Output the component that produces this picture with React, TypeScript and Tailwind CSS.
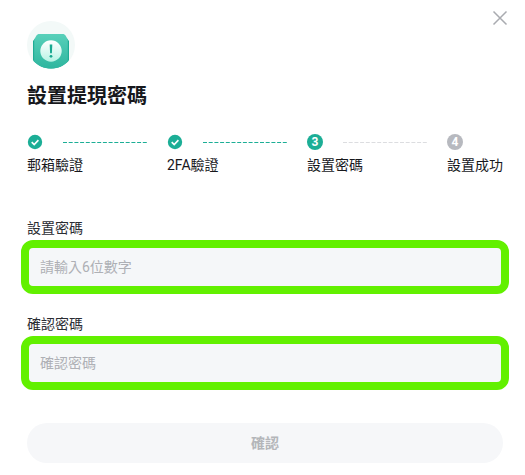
import { useState } from 'react'

type StepStatus = 'done' | 'current' | 'pending'

const steps: { label: string; status: StepStatus }[] = [
  { label: '郵箱驗證', status: 'done' },
  { label: '2FA驗證', status: 'done' },
  { label: '設置密碼', status: 'current' },
  { label: '設置成功', status: 'pending' },
]

function AlertBadge() {
  return (
    <svg className="size-12" viewBox="0 0 48 48" fill="none" aria-hidden="true">
      <defs>
        <linearGradient id="badge-front" x1="24" y1="13" x2="24" y2="47" gradientUnits="userSpaceOnUse">
          <stop stopColor="#58d0ba" />
          <stop offset="1" stopColor="#2fb69f" />
        </linearGradient>
        <linearGradient id="badge-dot" x1="24" y1="20" x2="24" y2="41" gradientUnits="userSpaceOnUse">
          <stop stopColor="#ffffff" />
          <stop offset="1" stopColor="#b5f3e4" />
        </linearGradient>
      </defs>
      <circle cx="24" cy="24" r="24" fill="#f3f9f8" />
      {/* darker back plate showing at both sides */}
      <path
        d="M8 17.5h32l2 2.5v18.5c0 1-.4 1.700-1.200 2.300C36 45 31 47.500 24 47.500S12 45 7.200 40.800C6.400 40.200 6 39.500 6 38.500V20Z"
        fill="#20ac95"
      />
      <path
        d="M12.500 13h23c1.500 0 2.500.6 3.200 1.800l1.400 2.400c.5.8.7 1.600.7 2.500V40.500C36.500 45 31 47.500 24 47.500S11.500 45 7.200 40.500V19.700c0-.9.2-1.700.7-2.500l1.400-2.400c.7-1.200 1.700-1.800 3.200-1.800Z"
        fill="url(#badge-front)"
      />
      <circle cx="24" cy="30" r="10.7" fill="url(#badge-dot)" />
      <path d="M22.7 23.5h2.6l-.4 8.8h-1.8z" fill="#17a88f" />
      <circle cx="24" cy="35.3" r="1.4" fill="#17a88f" />
    </svg>
  )
}

function StepIcon({ status, index }: { status: StepStatus; index: number }) {
  if (status === 'done') {
    return (
      <svg className="size-4 shrink-0" viewBox="0 0 16 16" fill="none" aria-hidden="true">
        <circle cx="8" cy="8" r="7.2" fill="#1cae96" />
        <path d="m4.700 8.100 2.500 2.400 4.200-4.400" stroke="#fff" strokeWidth="1.600" />
      </svg>
    )
  }

  return (
    <span
      className={`flex size-4 shrink-0 items-center justify-center rounded-full text-xs font-bold text-white ${
        status === 'current' ? 'bg-[#1cae96]' : 'bg-[#b7b9bf]'
      }`}
    >
      {index}
    </span>
  )
}

interface FieldProps {
  id: string
  label: string
  placeholder: string
  value: string
  onChange: (value: string) => void
}

function Field({ id, label, placeholder, value, onChange }: FieldProps) {
  return (
    <div className="flex flex-col gap-0.5">
      <label htmlFor={id} className="text-sm text-[#2b2d33]">
        {label}
      </label>
      <div className="-mx-1.5 rounded-xl border-8 border-[#62f000] bg-[#f5f7f9]">
        <input
          id={id}
          type="text"
          inputMode="numeric"
          value={value}
          onChange={(e) => onChange(e.target.value)}
          placeholder={placeholder}
          className="block h-[38px] w-full bg-transparent px-[11px] text-sm text-[#17181c] outline-none placeholder:text-[#aeb0b5]"
        />
      </div>
    </div>
  )
}

export default function App() {
  const [password, setPassword] = useState('')
  const [confirm, setConfirm] = useState('')

  return (
    <main className="relative bg-white pt-[21px] pr-[22px] pb-3 pl-[27px] font-[Roboto,'Noto_Sans_CJK_TC',sans-serif] text-[#17181c]">
      <button type="button" aria-label="關閉" className="absolute top-2.5 right-[17px]">
        <svg className="size-4" viewBox="0 0 16 16" fill="none">
          <path d="m1.500 1.500 13 13M14.500 1.500l-13 13" stroke="#a9abb0" strokeWidth="1.500" />
        </svg>
      </button>

      <AlertBadge />
      <h1 className="mt-[13px] text-xl font-bold">設置提現密碼</h1>

      <ol className="mt-6 flex">
        {steps.map((step, i) => (
          <li key={step.label} className={i < steps.length - 1 ? 'min-w-0 flex-1' : 'shrink-0'}>
            <div className="flex items-center">
              <StepIcon status={step.status} index={i + 1} />
              {i < steps.length - 1 && (
                <svg className="mx-5 h-px w-0 flex-1" aria-hidden="true">
                  <line
                    x2="100%"
                    y1="0.5"
                    y2="0.5"
                    stroke={step.status === 'done' ? '#1cae96' : '#dcdde0'}
                    strokeDasharray="4 1.7"
                  />
                </svg>
              )}
            </div>
            <p className="mt-[5px] text-sm whitespace-nowrap">{step.label}</p>
          </li>
        ))}
      </ol>

      <form className="mt-[43px]" onSubmit={(e) => e.preventDefault()}>
        <div className="flex flex-col gap-5">
          <Field
            id="password"
            label="設置密碼"
            placeholder="請輸入6位數字"
            value={password}
            onChange={setPassword}
          />
          <Field
            id="confirm"
            label="確認密碼"
            placeholder="確認密碼"
            value={confirm}
            onChange={setConfirm}
          />
        </div>
        <button
          type="submit"
          className="mt-[33px] h-10 w-full rounded-full bg-[#f6f7f9] text-sm font-bold text-[#b4b6ba]"
        >
          確認
        </button>
      </form>
    </main>
  )
}
